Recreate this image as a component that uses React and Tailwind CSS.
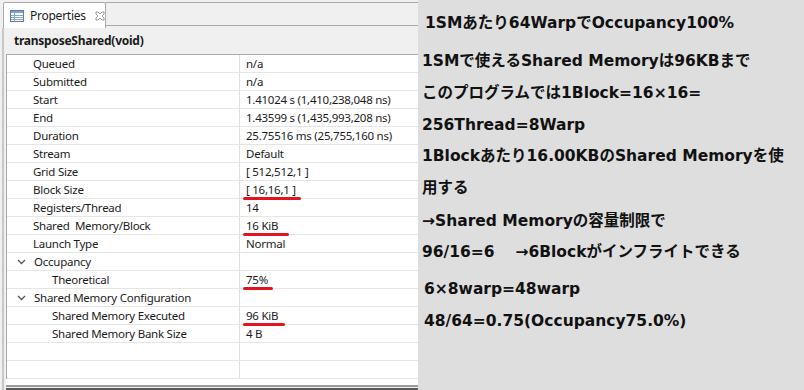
import React from "react";

const rows = [
  { label: "Queued", value: "n/a" },
  { label: "Submitted", value: "n/a" },
  { label: "Start", value: "1.41024 s (1,410,238,048 ns)" },
  { label: "End", value: "1.43599 s (1,435,993,208 ns)" },
  { label: "Duration", value: "25.75516 ms (25,755,160 ns)" },
  { label: "Stream", value: "Default" },
  { label: "Grid Size", value: "[ 512,512,1 ]" },
  { label: "Block Size", value: "[ 16,16,1 ]", mark: "w-[58px]" },
  { label: "Registers/Thread", value: "14" },
  { label: "Shared\u00a0 Memory/Block", value: "16 KiB", mark: "w-[46px]" },
  { label: "Launch Type", value: "Normal" },
  { label: "Occupancy", group: true },
  { label: "Theoretical", value: "75%", nested: true, mark: "w-[30px]" },
  { label: "Shared Memory Configuration", group: true },
  { label: "Shared Memory Executed", value: "96 KiB", nested: true, mark: "w-[42px]" },
  { label: "Shared Memory Bank Size", value: "4 B", nested: true },
  { label: "", value: "" },
  { label: "", value: "" },
];

const notes = [
  { text: "1SMあたり64WarpでOccupancy100%", cls: "mt-[12px] ml-[3px]" },
  { text: "1SMで使えるShared Memoryは96KBまで", cls: "mt-[15px]" },
  { text: "このプログラムでは1Block=16×16=", cls: "mt-[9px]" },
  { text: "256Thread=8Warp", cls: "mt-[9px]" },
  { text: "1Blockあたり16.00KBのShared Memoryを使", cls: "mt-[8px]" },
  { text: "用する", cls: "mt-[9px]" },
  { text: "→Shared Memoryの容量制限で", cls: "mt-[10px]" },
  { text: "96/16=6\u3000 →6Blockがインフライトできる", cls: "mt-[8px]" },
  { text: "6×8warp=48warp", cls: "mt-[14px] ml-[2px]" },
  { text: "48/64=0.75(Occupancy75.0%)", cls: "mt-[9px] ml-[2px]" },
];

function TableIcon() {
  return (
    <svg width="14" height="12" viewBox="0 0 14 12">
      <rect x="0.5" y="0.5" width="13" height="11" fill="#fff" stroke="#5a7fa8" />
      <rect x="1" y="1" width="12" height="2" fill="#7ea3cc" />
      <line x1="1" y1="5.5" x2="13" y2="5.5" stroke="#8aa6c6" />
      <line x1="1" y1="7.5" x2="13" y2="7.5" stroke="#8aa6c6" />
      <line x1="1" y1="9.5" x2="13" y2="9.5" stroke="#8aa6c6" />
      <line x1="4.5" y1="3" x2="4.5" y2="11" stroke="#8aa6c6" />
    </svg>
  );
}

function CloseIcon() {
  return (
    <svg width="10" height="10" viewBox="0 0 10 10">
      <path
        d="M1 1 L3 1 L5 3 L7 1 L9 1 L9 3 L7 5 L9 7 L9 9 L7 9 L5 7 L3 9 L1 9 L1 7 L3 5 L1 3 Z"
        fill="none"
        stroke="#8c8c8c"
        strokeWidth="0.9"
      />
    </svg>
  );
}

function Chevron() {
  return (
    <svg width="9" height="6" viewBox="0 0 9 6">
      <path d="M1 1 L4.5 4.5 L8 1" fill="none" stroke="#555" strokeWidth="1.3" />
    </svg>
  );
}

export default function App() {
  return (
    <div className="flex h-[390px] w-[804px] overflow-hidden bg-[#dedede]">
      {/* Properties view */}
      <div
        className="flex h-full w-[418px] flex-col bg-[#f0f0f0] text-[11.5px] tracking-[-0.25px] text-[#1a1a1a]"
        style={{ fontFamily: '"Noto Sans", "Open Sans", sans-serif' }}
      >
        <div className="flex h-[28px] items-end pl-[3px]">
          <div className="flex h-[26px] w-[103px] items-center gap-[6px] rounded-t-[2px] border border-b-0 border-[#a9a9a9] bg-white pl-[6px]">
            <TableIcon />
            <span className="text-[12px] leading-none">Properties</span>
            <span className="ml-[3px]">
              <CloseIcon />
            </span>
          </div>
          <div className="mb-[2px] h-[24px] flex-1 border-y border-[#a9a9a9] bg-[#f0f0f0]" />
        </div>
        <div className="ml-[2px] flex flex-1 flex-col border-l-[2px] border-[#c8c8c8] pl-[2px]">
          <div className="flex h-[26px] items-center bg-[#f0f0f0] pl-[8px] text-[12px] font-bold">
            transposeShared(void)
          </div>
          <div className="flex flex-col border-t border-l border-[#a9a9a9] bg-white">
            {rows.map((r, i) => (
              <div key={i} className="flex h-[18px] border-b border-[#e5e5e5]">
                <div
                  className={`flex w-[233px] items-center border-r border-[#e0e0e0] ${
                    r.group ? "pl-[10px]" : r.nested ? "pl-[45px]" : "pl-[26px]"
                  }`}
                >
                  {r.group && (
                    <span className="mr-[8px] flex items-center">
                      <Chevron />
                    </span>
                  )}
                  <span className="whitespace-nowrap leading-none">{r.label}</span>
                </div>
                <div className="flex flex-1 items-center pl-[6px]">
                  <span className="relative whitespace-nowrap leading-none">
                    {r.value}
                    {r.mark && (
                      <span
                        className={`absolute left-[-3px] top-[13px] h-[3px] rounded-full bg-[#e3141e] ${r.mark}`}
                      />
                    )}
                  </span>
                </div>
              </div>
            ))}
          </div>
          <div className="flex-1 bg-white" />
          <div className="h-[2px] bg-[#9a9a9a]" />
          <div className="h-[1px] bg-[#f0f0f0]" />
          <div className="h-[2px] bg-[#5a5a5a]" />
        </div>
      </div>

      {/* Notes */}
      <div
        className="flex flex-1 flex-col pl-[4px] text-[15.5px] font-bold leading-[23px] text-[#111]"
        style={{ fontFamily: '"DejaVu Sans", "Noto Sans CJK JP", sans-serif' }}
      >
        {notes.map((n, i) => (
          <div key={i} className={`whitespace-pre ${n.cls}`}>
            {n.text}
          </div>
        ))}
      </div>
    </div>
  );
}
